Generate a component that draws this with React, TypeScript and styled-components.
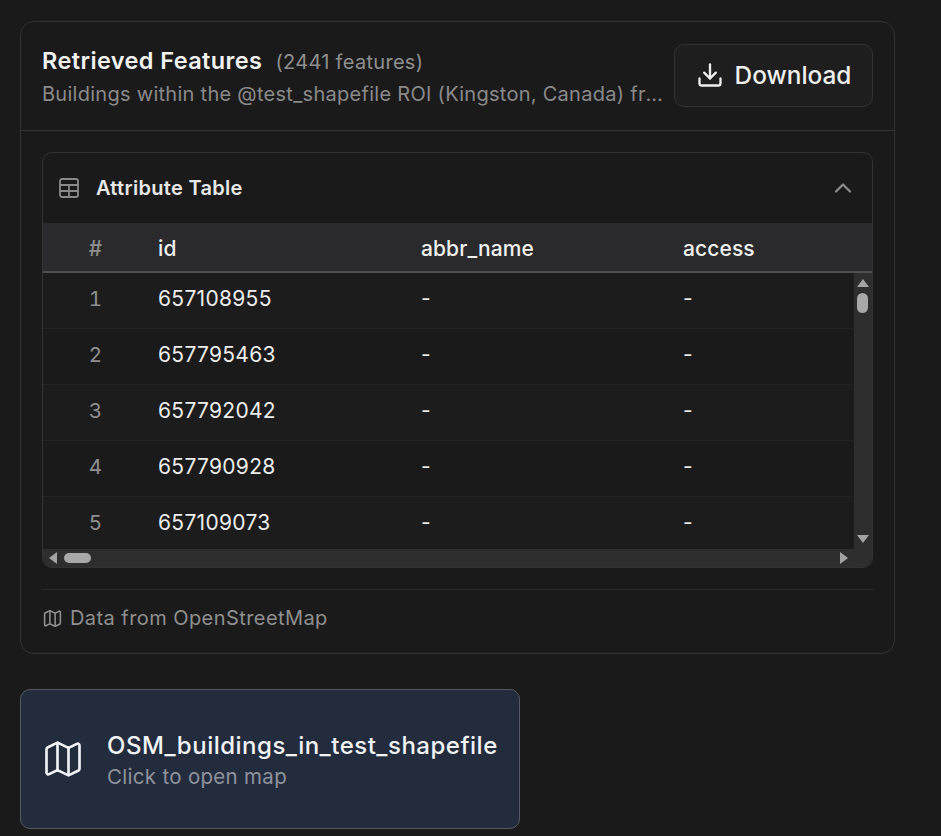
import React from "react";
import styled, { createGlobalStyle } from "styled-components";
import { Download, Map as MapIcon, ChevronUp } from "lucide-react";

const Global = createGlobalStyle`
  html, body { margin: 0; padding: 0; background: #1a1a1a; }
  body { font-family: Inter, "Liberation Sans", sans-serif; }
  * { box-sizing: border-box; }
`;

const Page = styled.div`
  width: 941px;
  height: 836px;
  overflow: hidden;
  padding: 21px 46px 0 20px;
  display: flex;
  flex-direction: column;
  gap: 35px;
`;

const Card = styled.section`
  height: 633px;
  border: 1px solid #333333;
  border-radius: 14px;
  background: #1a1a1a;
  display: flex;
  flex-direction: column;
`;

const CardHeader = styled.header`
  height: 109px;
  padding: 22px 21px 0 21px;
  border-bottom: 1px solid #333333;
  display: flex;
  justify-content: space-between;
  align-items: flex-start;
  gap: 11px;
`;

const HeaderText = styled.div`
  width: 621px;
  min-width: 0;
`;

const TitleLine = styled.div`
  display: flex;
  align-items: baseline;
  gap: 13px;
  height: 37px;
  padding-top: 1px;
`;

const Title = styled.h2`
  margin: 0;
  font-size: 23.5px;
  letter-spacing: 0.4px;
  line-height: 32px;
  font-weight: 600;
  color: #f2f2f2;
`;

const Count = styled.span`
  font-size: 20px;
  letter-spacing: 0.3px;
  line-height: 28px;
  color: #8f8f8f;
`;

const Subtitle = styled.p`
  margin: 0;
  font-size: 20px;
  letter-spacing: 0.28px;
  line-height: 26px;
  color: #8a8a8a;
  white-space: nowrap;
  overflow: hidden;
  text-overflow: ellipsis;
`;

const DownloadButton = styled.button`
  flex: none;
  width: 199px;
  height: 63px;
  border: 1px solid #333333;
  border-radius: 10px;
  background: #1e1e1e;
  color: #efefef;
  font: 500 24.4px Inter, "Liberation Sans", sans-serif;
  display: flex;
  align-items: center;
  justify-content: center;
  gap: 11px;
  padding: 0 0 1px;
`;

const CardBody = styled.div`
  flex: 1;
  padding: 21px 21px 0 21px;
  display: flex;
  flex-direction: column;
`;

const TableBox = styled.div`
  height: 416px;
  border: 1px solid #333333;
  border-radius: 10px;
  overflow: hidden;
  display: flex;
  flex-direction: column;
`;

const TableTitleBar = styled.div`
  height: 70px;
  flex: none;
  padding: 0 15px 0 14px;
  display: flex;
  align-items: center;
  justify-content: space-between;
`;

const TableTitle = styled.div`
  display: flex;
  align-items: center;
  gap: 15px;
  color: #e8e8e8;
  font-size: 20px;
  letter-spacing: 0.3px;
  font-weight: 600;
  svg { color: #8a8a8a; }
`;

const columns = "105px 263px 262px 1fr";

const HeadRow = styled.div`
  flex: none;
  height: 50px;
  display: grid;
  grid-template-columns: ${columns};
  align-items: center;
  background: #2a2a2c;
  border-bottom: 2px solid #505050;
  padding-top: 3px;
`;

const HeadCell = styled.div<{ $index?: boolean }>`
  font-size: 21px;
  letter-spacing: 0.1px;
  font-weight: 500;
  color: ${(p) => (p.$index ? "#8f8f8f" : "#f0f0f0")};
  padding-left: ${(p) => (p.$index ? "0" : "10px")};
  text-align: ${(p) => (p.$index ? "center" : "left")};
`;

const Scroller = styled.div`
  flex: 1;
  display: grid;
  grid-template-columns: 1fr 18px;
  grid-template-rows: 1fr 18px;
  min-height: 0;
`;

const Rows = styled.div`
  overflow: hidden;
  min-height: 0;
`;

const Row = styled.div<{ $alt: boolean }>`
  height: 56px;
  display: grid;
  grid-template-columns: ${columns};
  align-items: center;
  background: ${(p) => (p.$alt ? "#1c1c1c" : "#1a1a1a")};
  border-bottom: 1px solid #232323;
  padding-bottom: 4px;
  &:first-child { padding-bottom: 5px; }
`;

const Cell = styled.div`
  font-size: 21px;
  letter-spacing: 0.3px;
  color: #ededed;
  padding-left: 10px;
`;

const IndexCell = styled.div`
  font-size: 20.5px;
  color: #8f8f8f;
  text-align: center;
  font-variant-numeric: tabular-nums;
`;

const VBar = styled.div`
  background: #2e2e2e;
  display: flex;
  flex-direction: column;
  align-items: center;
  justify-content: space-between;
  padding: 5px 0 5px;
  position: relative;
`;

const VThumb = styled.div`
  position: absolute;
  top: 20px;
  left: 3px;
  width: 11px;
  height: 20px;
  border-radius: 6px;
  background: #a8a8a8;
`;

const HBar = styled.div`
  background: #2e2e2e;
  display: flex;
  align-items: center;
  justify-content: space-between;
  padding: 0 5px;
  position: relative;
`;

const HThumb = styled.div`
  position: absolute;
  left: 21px;
  top: 4px;
  width: 27px;
  height: 10px;
  border-radius: 5px;
  background: #a8a8a8;
`;

const Corner = styled.div`
  background: #2e2e2e;
`;

const Footer = styled.footer`
  margin-top: 21px;
  border-top: 1px solid #2c2c2c;
  padding-top: 15px;
  display: flex;
  align-items: center;
  gap: 7px;
  color: #8f8f8f;
  font-size: 20px;
  letter-spacing: 0.43px;
  line-height: 26px;
  svg { flex: none; }
`;

const MapCard = styled.button`
  width: 500px;
  height: 140px;
  border: 1px solid #55585f;
  border-radius: 10px;
  background: #232c3d;
  display: flex;
  align-items: center;
  gap: 22px;
  padding: 4px 0 0 20px;
  text-align: left;
  font-family: Inter, "Liberation Sans", sans-serif;
  svg { margin-top: -4px; flex: none; }
`;

const MapName = styled.div`
  font-size: 24px;
  letter-spacing: 0.5px;
  line-height: 32px;
  font-weight: 500;
  color: #f1f3f6;
  white-space: nowrap;
`;

const MapHint = styled.div`
  font-size: 20.5px;
  letter-spacing: 0.3px;
  line-height: 30px;
  color: #8e939c;
`;

const GridIcon = () => (
  <svg width="24" height="24" viewBox="0 0 24 24" fill="none" stroke="currentColor" strokeWidth="1.8" strokeLinecap="round" strokeLinejoin="round">
    <rect x="3" y="3" width="18" height="18" rx="2" />
    <path d="M3 9h18M3 15h18M12 9v12" />
  </svg>
);

const Arrow = ({ dir }: { dir: "up" | "down" | "left" | "right" }) => {
  const pts = {
    up: "0,9 6,1 12,9",
    down: "0,1 6,9 12,1",
    left: "9,0 1,6 9,12",
    right: "1,0 9,6 1,12",
  }[dir];
  const vertical = dir === "up" || dir === "down";
  return (
    <svg width={vertical ? 12 : 10} height={vertical ? 10 : 12} viewBox={vertical ? "0 0 12 10" : "0 0 10 12"}>
      <polygon points={pts} fill="#a3a3a3" />
    </svg>
  );
};

const rows = [
  [1, "657108955"],
  [2, "657795463"],
  [3, "657792042"],
  [4, "657790928"],
  [5, "657109073"],
] as const;

export default function App() {
  return (
    <>
      <Global />
      <Page>
        <Card>
          <CardHeader>
            <HeaderText>
              <TitleLine>
                <Title>Retrieved Features</Title>
                <Count>(2441 features)</Count>
              </TitleLine>
              <Subtitle>Buildings within the @test_shapefile ROI (Kingston, Canada) from OpenStreetMap</Subtitle>
            </HeaderText>
            <DownloadButton>
              <Download size={28} strokeWidth={2} />
              Download
            </DownloadButton>
          </CardHeader>
          <CardBody>
            <TableBox>
              <TableTitleBar>
                <TableTitle>
                  <GridIcon />
                  Attribute Table
                </TableTitle>
                <ChevronUp size={28} color="#8a8a8a" strokeWidth={2} />
              </TableTitleBar>
              <HeadRow>
                <HeadCell $index>#</HeadCell>
                <HeadCell>id</HeadCell>
                <HeadCell>abbr_name</HeadCell>
                <HeadCell>access</HeadCell>
              </HeadRow>
              <Scroller>
                <Rows>
                  {rows.map(([n, id], i) => (
                    <Row key={n} $alt={i % 2 === 0}>
                      <IndexCell>{n}</IndexCell>
                      <Cell>{id}</Cell>
                      <Cell>-</Cell>
                      <Cell>-</Cell>
                    </Row>
                  ))}
                </Rows>
                <VBar>
                  <Arrow dir="up" />
                  <VThumb />
                  <Arrow dir="down" />
                </VBar>
                <HBar>
                  <Arrow dir="left" />
                  <HThumb />
                  <Arrow dir="right" />
                </HBar>
                <Corner />
              </Scroller>
            </TableBox>
            <Footer>
              <MapIcon size={21} strokeWidth={1.8} />
              Data from OpenStreetMap
            </Footer>
          </CardBody>
        </Card>
        <MapCard>
          <MapIcon size={44} color="#f1f3f6" strokeWidth={1.45} />
          <div>
            <MapName>OSM_buildings_in_test_shapefile</MapName>
            <MapHint>Click to open map</MapHint>
          </div>
        </MapCard>
      </Page>
    </>
  );
}
